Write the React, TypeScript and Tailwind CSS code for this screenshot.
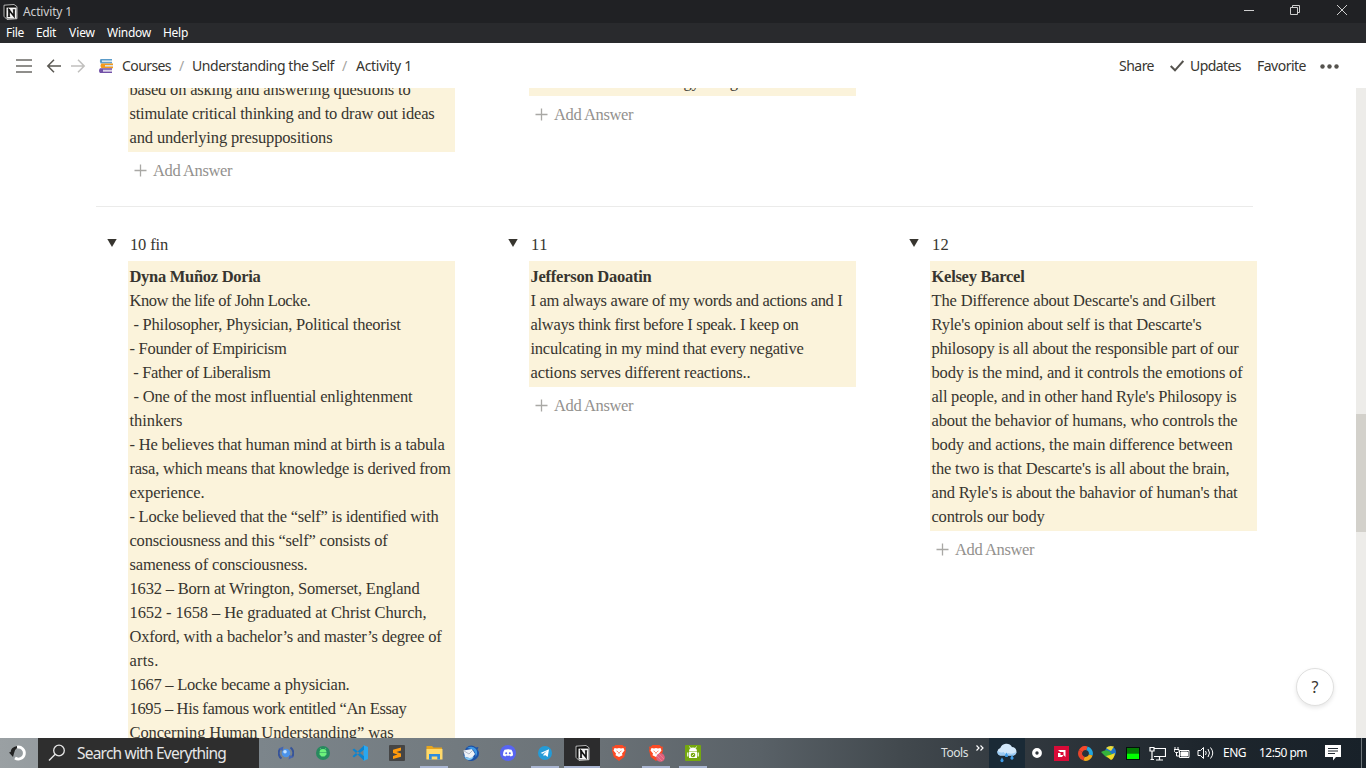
import React, { useLayoutEffect, useRef, useState } from "react";

/** A line of text whose tracking is adjusted so that it spans a given width. */
function Fit({ w, children, className = "" }: { w: number; children: string; className?: string }) {
  const ref = useRef<HTMLSpanElement>(null);
  const [ls, setLs] = useState(0);
  useLayoutEffect(() => {
    const el = ref.current;
    if (!el) return;
    const natural = el.getBoundingClientRect().width;
    setLs((w - natural) / Math.max(1, children.length));
  }, [w, children]);
  return (
    <span ref={ref} className={"inline-block whitespace-pre " + className} style={{ letterSpacing: ls + "px" }}>
      {children}
    </span>
  );
}

type L = [string, number];

const socratic: L[] = [
  ["based on asking and answering questions to", 281],
  ["stimulate critical thinking and to draw out ideas", 305],
  ["and underlying presuppositions", 203],
];
const ten: L[] = [
  ["Know the life of John Locke.", 181],
  [" - Philosopher, Physician, Political theorist", 271],
  ["- Founder of Empiricism", 157],
  [" - Father of Liberalism", 141],
  [" - One of the most influential enlightenment", 283],
  ["thinkers", 53],
  ["- He believes that human mind at birth is a tabula", 315],
  ["rasa, which means that knowledge is derived from", 321],
  ["experience.", 75],
  ["- Locke believed that the “self” is identified with", 309],
  ["consciousness and this “self” consists of", 258],
  ["sameness of consciousness.", 178],
  ["1632 – Born at Wrington, Somerset, England", 290],
  ["1652 - 1658 – He graduated at Christ Church,", 297],
  ["Oxford, with a bachelor’s and master’s degree of", 312],
  ["arts.", 29],
  ["1667 – Locke became a physician.", 220],
  ["1695 – His famous work entitled “An Essay", 277],
  ["Concerning Human Understanding” was", 264],
];
const eleven: L[] = [
  ["I am always aware of my words and actions and I", 312],
  ["always think first before I speak. I keep on", 268],
  ["inculcating in my mind that every negative", 273],
  ["actions serves different reactions..", 220],
];
const twelve: L[] = [
  ["The Difference about Descarte's and Gilbert", 284],
  ["Ryle's opinion about self is that Descarte's", 270],
  ["philosopy is all about the responsible part of our", 307],
  ["body is the mind, and it controls the emotions of", 311],
  ["all people, and in other hand Ryle's Philosopy is", 305],
  ["about the behavior of humans, who controls the", 306],
  ["body and actions, the main difference between", 301],
  ["the two is that Descarte's is all about the brain,", 298],
  ["and Ryle's is about the bahavior of human's that", 306],
  ["controls our body", 113],
];

function Note({ name, lines }: { name?: L; lines: L[] }) {
  return (
    <div className="ml-8 w-[327px] bg-[#fbf3db] pb-0.5 pl-[1.5px] pt-1">
      {name && <div className="h-6"><Fit w={name[1]} className="font-bold">{name[0]}</Fit></div>}
      {lines.map((l) => (
        <div key={l[0]} className="h-6"><Fit w={l[1]}>{l[0]}</Fit></div>
      ))}
    </div>
  );
}

function AddAnswer() {
  return (
    <div className="ml-[38px] mt-1.5 flex h-6 items-center text-[#93918e]">
      <svg width="13" height="13" viewBox="0 0 13 13" className="mr-1.5 shrink-0">
        <path d="M6.5 0.5v12M0.5 6.5h12" stroke="#a9a8a5" strokeWidth="1.3" />
      </svg>
      <Fit w={79} className="pt-px">Add Answer</Fit>
    </div>
  );
}

function Toggle({ title, name, lines }: { title: L; name: L; lines: L[] }) {
  return (
    <div className="w-[401px] shrink-0">
      <div className="flex h-[29px] items-start">
        <svg width="10" height="8" viewBox="0 0 10 8" className="ml-[11px] mr-[13px] mt-[7px]">
          <path d="M0.3 0h9.4L5 8z" fill="#37352f" />
        </svg>
        <Fit w={title[1]} className="pt-px">{title[0]}</Fit>
      </div>
      <Note name={name} lines={lines} />
      <AddAnswer />
    </div>
  );
}

function NotionLogo() {
  return (
    <svg width="15" height="16" viewBox="0 0 15 16">
      <path d="M1 1.2L11 0.5l3 2.2v12L4 15.5 1 12.3z" fill="#111" stroke="#ddd" strokeWidth="0.8" />
      <path d="M3.5 3.6h10v11h-10z" fill="#f4f4f4" />
      <path d="M6 12.2V6l5 6.2V6" stroke="#111" strokeWidth="1.7" fill="none" />
      <path d="M4.800 5.800h2.400M9.800 5.800h2.400M4.800 12.400h2.400" stroke="#111" strokeWidth="1" fill="none" />
    </svg>
  );
}

function Books() {
  return (
    <svg width="14" height="14" viewBox="0 0 14 14">
      <path d="M1.5 0H13v4.500H1.5Q0 2 1.5 0z" fill="#5b9bc9" />
      <path d="M3 1.4h10v1.7H3z" fill="#d5e4ee" />
      <path d="M2.5 4.500H14v4.700H2.5Q0.5 6.700 2.500 4.500z" fill="#f39a1e" />
      <path d="M6 6h8v1.600H6z" fill="#d9e1e8" />
      <path d="M1 9.200h12V14H1q-2-2.300 0-4.800z" fill="#7352a8" />
      <path d="M4 10.700h9v2H4z" fill="#ddd6ea" />
    </svg>
  );
}

const BAR = "relative flex h-[30px] shrink-0 items-center justify-center";

function Brave() {
  return (
    <svg width="16" height="18" viewBox="0 0 16 18">
      <path d="M4.500 1h7l1.500 1.500 2 .3-.5 2.200.5 1.500-1.800 6.500L8 17 2.800 13 1 6.500 1.500 5 1 2.800l2-.3z" fill="#fb4a24" />
      <path d="M3.500 4l2.500.6 2-.5 2 .5 2.500-.6 1 2.500-2.500 3 .5 1.700L8 13l-3.500-1.800.5-1.700-2.500-3z" fill="#fff" />
      <path d="M5 6.500l2 .7-.5.900zM11 6.500l-2 .700.500.900zM7.300 8h1.400L8 10.500z" fill="#fb4a24" />
    </svg>
  );
}

function Taskbar() {
  return (
    <footer className="flex h-[30px] w-full shrink-0 overflow-hidden bg-[linear-gradient(90deg,#9aa0a3_0px,#7c858b_260px,#737b80_440px,#6a7176_600px,#596167_760px,#42494e_900px,#343b41_1000px,#1e262d_1200px,#182129_1366px)] font-['Noto_Sans',sans-serif] text-white">
      <div className={BAR + " w-[38px]"}>
        <svg width="18" height="18" viewBox="0 0 18 18" className="-ml-0.5">
          <path d="M8 3.200A6 6 0 1 1 6 14" fill="none" stroke="#fff" strokeWidth="2.800" />
          <path d="M8 2Q1.500 3.500 1.700 8L0 8.500 4 13l1-3.800Q5.500 5.500 8 4z" fill="#222" />
        </svg>
      </div>
      <div className="flex w-[221px] items-center bg-[#2e2e2e]">
        <svg width="18" height="18" viewBox="0 0 18 18" className="ml-[10px] mr-[11px]">
          <circle cx="11" cy="6.500" r="5.300" fill="none" stroke="#e8e8e8" strokeWidth="1.300" />
          <path d="M7.200 10.300L1 16.500" stroke="#e8e8e8" strokeWidth="1.400" />
        </svg>
        <Fit w={149} className="pt-px text-[15.500px] text-[#e6e6e6]">Search with Everything</Fit>
      </div>
      <div className={BAR + " ml-[9px] w-9"}>
        <svg width="16" height="16" viewBox="0 0 16 16">
          <circle cx="8" cy="8" r="4.300" fill="#4b93ea" /><circle cx="7" cy="6.800" r="1.800" fill="#c4e2ff" />
          <path d="M3.500 13.500A6.800 6.800 0 0 1 2 4M12.500 2.500a6.800 6.800 0 0 1 1.500 9.500" stroke="#36549a" strokeWidth="2" fill="none" />
          <path d="M0.500 3.500L5.500 1.500 4.500 6zM10.500 14.500l1-4.500 4 2z" fill="#4565b0" />
        </svg>
      </div>
      <div className={BAR + " ml-[1px] w-9"}>
        <svg width="14" height="14" viewBox="0 0 14 14">
          <circle cx="7" cy="7" r="7" fill="#28895f" />
          <path d="M3.500 6.500a3.500 3.500 0 0 1 7 0zM3.500 7h7v1.500L8.500 10.500h-3l-2-2z" fill="#6cf27c" />
          <path d="M5 3.500L4.300 2.300M9 3.500L9.700 2.300" stroke="#6cf27c" strokeWidth="0.800" />
        </svg>
      </div>
      <div className={BAR + " ml-[1px] w-9"}>
        <svg width="16" height="16" viewBox="0 0 16 16">
          <path d="M11.500 0L16 2v12l-4.500 2z" fill="#2aa7f0" />
          <path d="M12 0.500v4.200L2 12.500.500 11.200zM12 15.500v-4.200L2 3.500.500 4.800z" fill="#0b84d0" />
        </svg>
      </div>
      <div className={BAR + " ml-[1px] w-9"}>
        <svg width="16" height="16" viewBox="0 0 16 16">
          <rect width="16" height="16" rx="1" fill="#454545" />
          <path d="M12 2.500v3L7.500 7l4.500 1.500v3.200L4 14v-3l4.500-1.500L4 8V4.800z" fill="#ff9a0c" />
        </svg>
      </div>
      <div className={BAR + " ml-[1px] w-9"}>
        <svg width="17" height="14" viewBox="0 0 17 14">
          <path d="M0.500 0H6l1.500 1.500H16V13H0.500z" fill="#e6a51e" /><path d="M0.500 3h16v10.500H0.500z" fill="#ffd96a" />
          <path d="M3 13.500V8h11v5.500h-2.700v-3H5.700v3z" fill="#2f8bdb" />
        </svg>
        <span className="absolute bottom-0 left-1 h-0.5 w-7 bg-[#aab6d2]" />
      </div>
      <div className={BAR + " ml-[1px] w-9"}>
        <svg width="17" height="17" viewBox="0 0 17 17">
          <path d="M3 3Q8-1.500 13 2.500l2.500-.500-1 2.500q3 4 0 8-3.500 4.500-9 3Q.500 13.500.500 9z" fill="#1c51a6" />
          <path d="M0.500 5.500L9 4l3 5-3.500 4.500L2 12z" fill="#eef2f7" /><path d="M0.800 5.800L6 9l4-4" fill="none" stroke="#a3abbd" strokeWidth="0.800" />
          <path d="M4 3q5-3 9 1 2.500 4-.500 8 .500-5-3-7.500Q7 3 4 3z" fill="#3f97e3" />
          <path d="M1 11q5 3.500 10 .500-2 4-6 3.500Q2 14 1 11z" fill="#83c9f5" />
        </svg>
      </div>
      <div className={BAR + " ml-[1px] w-9"}>
        <svg width="16" height="16" viewBox="0 0 16 16">
          <circle cx="8" cy="8" r="8" fill="#5865f2" />
          <path d="M4.500 4.800Q8 3.500 11.500 4.800q1.700 2.500 1.600 5.400-1 1-2.600 1.200l-.7-1q-1.800.5-3.600 0l-.7 1q-1.600-.2-2.600-1.200Q2.800 7.300 4.500 4.800z" fill="#fff" />
          <circle cx="6.200" cy="8.200" r="1" fill="#5865f2" /><circle cx="9.800" cy="8.200" r="1" fill="#5865f2" />
        </svg>
      </div>
      <div className={BAR + " ml-[1px] w-9"}>
        <svg width="14" height="14" viewBox="0 0 14 14">
          <circle cx="7" cy="7" r="7" fill="#249bd7" /><path d="M2.500 7l8.500-3.700L9.700 11 7 9l-1.300 1.300L5.500 8.200 9 5 4.500 7.800z" fill="#fff" />
        </svg>
        <span className="absolute bottom-0 left-1 h-0.5 w-7 bg-[#aab6d2]" />
      </div>
      <div className={BAR + " ml-[1px] w-9 bg-[#2c2c2d]"}>
        <NotionLogo />
        <span className="absolute bottom-0 left-0 h-0.5 w-9 bg-[#aab6d2]" />
      </div>
      <div className={BAR + " ml-[1px] w-9"}><Brave /></div>
      <div className={BAR + " ml-[1px] w-9"}>
        <Brave />
        <svg width="9" height="9" viewBox="0 0 9 9" className="absolute left-[18px] top-[15px]">
          <circle cx="4.500" cy="4.500" r="4.300" fill="#e2607c" /><path d="M1 3l5 5M3 1l5 5" stroke="#f38ea0" strokeWidth="0.600" />
        </svg>
        <span className="absolute bottom-0 left-1 h-0.5 w-7 bg-[#aab6d2]" />
      </div>
      <div className={BAR + " ml-[1px] w-9"}>
        <svg width="16" height="16" viewBox="0 0 16 16">
          <rect width="16" height="16" rx="1" fill="#75a80f" />
          <path d="M4 6.500a4 4 0 0 1 8 0zM4 7h8v6H4zM2.200 7.500h1.200v4H2.200zM12.600 7.500h1.200v4h-1.200z" fill="#fff" />
          <path d="M5.500 3L4.500 1.500M10.500 3l1-1.500" stroke="#fff" strokeWidth="0.900" />
          <circle cx="8" cy="10" r="2.300" fill="#75a80f" /><path d="M7 11l2-2" stroke="#fff" strokeWidth="0.800" />
        </svg>
        <span className="absolute bottom-0 left-1 h-0.5 w-7 bg-[#aab6d2]" />
      </div>
      <div className="ml-auto flex h-[30px] w-[425px] shrink-0 items-center text-xs">
        <Fit w={27} className="text-[#dfe1e2]">Tools</Fit>
        <svg width="8" height="6" viewBox="0 0 8 6" className="-mt-2.5 ml-2">
          <path d="M0.500 0.500L3 3 .5 5.500M4.500 0.500L7 3 4.500 5.500" fill="none" stroke="#fff" strokeWidth="1.200" />
        </svg>
        <div className="ml-[5px] flex h-[30px] w-9 items-center justify-center bg-[#1a2a36]">
          <svg width="22" height="20" viewBox="0 0 22 20">
            <path d="M4 12.500a4 4 0 0 1 .3-7.500A6.500 6.500 0 0 1 16 4a4.500 4.500 0 0 1 2 8.500z" fill="#d2e8fb" />
            <path d="M4 12.500a4 4 0 0 1-2.500-5q2 3 6 1.500 2 3 5 1 3 2 8-1a4 4 0 0 1-3 3.500z" fill="#9bcbf4" />
            <path d="M6 14.500l1.500 2.500a1.600 1.600 0 1 1-3 0zM16 12l1.500 2.500a1.600 1.600 0 1 1-3 0zM10.500 9.500l1.400 2.500a1.500 1.500 0 1 1-2.800 0z" fill="#3f9be6" />
          </svg>
        </div>
        <svg width="10" height="10" viewBox="0 0 10 10" className="ml-[7px]"><circle cx="5" cy="5" r="3.300" fill="none" stroke="#fff" strokeWidth="3.200" /></svg>
        <svg width="15" height="15" viewBox="0 0 15 15" className="ml-[12px]">
          <path d="M0 0h15v15H0z" fill="#d90b38" /><path d="M4 4h7.500v7L9.500 9V6H6zM4 7v4h4l1.500-2H6.500V7z" fill="#fff" />
        </svg>
        <svg width="15" height="15" viewBox="0 0 15 15" className="ml-[9px]">
          <g fill="none" strokeWidth="4"><path d="M2.700 5A5.400 5.400 0 0 1 9 2.300" stroke="#f6482b" /><path d="M9 2.300A5.400 5.400 0 0 1 12.700 9" stroke="#22a6df" /><path d="M12.700 9A5.400 5.400 0 0 1 6 12.700" stroke="#f0a91a" /><path d="M6 12.700A5.400 5.400 0 0 1 2.700 5" stroke="#e8442a" /></g>
        </svg>
        <svg width="16" height="15" viewBox="0 0 16 15" className="ml-[8px]">
          <circle cx="9.500" cy="6" r="5.500" fill="#2074c9" /><path d="M5 2q3-3 8-1.500L10 5z" fill="#e8dc3b" /><path d="M0 6q5-3 8-1l3 3-3 4-3-1z" fill="#35b23c" /><path d="M9 9l5-2q-1 6-4 7L5 10z" fill="#efda25" />
        </svg>
        <svg width="14" height="13" viewBox="0 0 14 13" className="ml-[9px]"><path d="M0 0h14v13H0z" fill="#02100a" /><path d="M1 1h12v5.500H1z" fill="#047b04" /><path d="M1 6.500h12V12H1z" fill="#00ff00" /></svg>
        <svg width="17" height="15" viewBox="0 0 17 15" className="ml-[9px]" fill="none" stroke="#fff">
          <path d="M5 2.500h11.500v8H5M10.500 11v3M7 14h7M1 1.500h4v3.500H1zM3 5v8.500M1.500 13.500H5" strokeWidth="1.200" />
        </svg>
        <svg width="16" height="12" viewBox="0 0 16 12" className="ml-[8px]" fill="none" stroke="#fff">
          <path d="M5.500 3.500h9.500v7H5.500z" /><path d="M7 5h6.500v4H7z" fill="#fff" /><path d="M1 0v2.500M4 0v2.500M0 2.500h5v2l-1 1H1.500l-1-1zM2.500 5.500V9H5" />
        </svg>
        <svg width="17" height="14" viewBox="0 0 17 14" className="ml-[7px]" fill="none" stroke="#fff">
          <path d="M1 4.500h2.500L6.500 1.500v11l-3-3H1zM8.500 5q1.500 2 0 4M11 3q3 4 0 8M13.500 1.500q4.500 5.500 0 11" />
        </svg>
        <Fit w={23} className="ml-[9px]">ENG</Fit>
        <Fit w={48} className="ml-[13px]">12:50 pm</Fit>
        <svg width="16" height="16" viewBox="0 0 16 16" className="ml-[18px]">
          <path d="M0 0h16v12h-5l-3 3.500V12H0z" fill="#fff" /><path d="M3 3.500h10M3 6h10M3 8.500h7" stroke="#202931" />
        </svg>
        <span className="ml-5 h-[30px] w-px bg-[#6d757a]" />
      </div>
    </footer>
  );
}

export default function App() {
  return (
    <div className="flex h-[768px] w-[1366px] flex-col overflow-hidden bg-white text-[#37352f]">
      <div className="flex h-[23px] shrink-0 items-center bg-[#202124] font-['Noto_Sans',sans-serif] text-xs text-[#cfcfd0]">
        <div className="ml-[3px] mr-[5px]"><NotionLogo /></div>
        <Fit w={49}>Activity 1</Fit>
        <svg width="104" height="12" viewBox="0 0 104 12" className="-mt-[3px] ml-auto mr-[18px]" fill="none" stroke="#cfcfcf">
          <path d="M0 6.500h10" /><path d="M46.500 3.500h7v7h-7zM48.500 3.500v-2h7v7h-2" /><path d="M93 1l10 10M103 1L93 11" />
        </svg>
      </div>
      <nav className="flex h-5 shrink-0 items-center gap-3 bg-[#292a2d] pl-1.5 font-['Noto_Sans',sans-serif] text-xs text-white">
        <Fit w={18}>File</Fit>
        <Fit w={20}>Edit</Fit>
        <Fit w={26} className="ml-px">View</Fit>
        <Fit w={44}>Window</Fit>
        <Fit w={25}>Help</Fit>
      </nav>
      <header className="flex h-[45px] shrink-0 items-center font-['Noto_Sans',sans-serif] text-sm text-[#37352f]">
        <svg width="70" height="14" viewBox="0 0 70 14" className="ml-4 mr-[13px] mt-px" fill="none">
          <path d="M0 1h16M0 7h16M0 13h16" stroke="#6b6965" strokeWidth="1.300" />
          <path d="M45 7H32M38 0.800L31.800 7 38 13.200" stroke="#5a5853" strokeWidth="1.500" />
          <path d="M55 7h13M62 0.800L68.200 7 62 13.200" stroke="#c1c0be" strokeWidth="1.500" />
        </svg>
        <Books />
        <Fit w={49} className="ml-[9px] pt-px">Courses</Fit>
        <span className="ml-2 w-[13px] text-[#a5a4a0]">/</span>
        <Fit w={142} className="pt-px">Understanding the Self</Fit>
        <span className="ml-2 w-[13px] text-[#a5a4a0]">/</span>
        <Fit w={56} className="ml-[1px] pt-px">Activity 1</Fit>
        <Fit w={35} className="ml-auto pt-px">Share</Fit>
        <svg width="14" height="12" viewBox="0 0 14 12" className="ml-4 mr-1.5"><path d="M0.700 6l4.300 4.300L13.300 1" fill="none" stroke="#55534e" strokeWidth="2" /></svg>
        <Fit w={51} className="pt-px">Updates</Fit>
        <Fit w={49} className="ml-4 pt-px">Favorite</Fit>
        <svg width="19" height="5" viewBox="0 0 19 5" className="ml-[14px] mr-[27px] mt-px" fill="#55534e"><circle cx="2.500" cy="2.500" r="2.200" /><circle cx="9.500" cy="2.500" r="2.200" /><circle cx="16.500" cy="2.500" r="2.200" /></svg>
      </header>
      <main className="flex h-[650px] shrink-0 overflow-hidden font-['Liberation_Serif',serif] text-[16.500px] leading-6">
        <div className="h-[650px] w-[1260px] overflow-hidden pl-24">
          <div className="flex h-[118px]">
            <div className="-mt-3.5 w-[401px] shrink-0"><Note lines={socratic} /><AddAnswer /></div>
            <div className="-mt-[22px] w-[401px] shrink-0"><Note lines={[["can be found in technology being", 207]]} /><AddAnswer /></div>
          </div>
          <div className="h-px w-[1157px] bg-[#ebebea]" />
          <div className="flex pt-[25px]">
            <Toggle title={["10 fin", 38]} name={["Dyna Muñoz Doria", 131]} lines={ten} />
            <Toggle title={["11", 17]} name={["Jefferson Daoatin", 121]} lines={eleven} />
            <Toggle title={["12", 17]} name={["Kelsey Barcel", 93]} lines={twelve} />
          </div>
        </div>
        <div className="flex w-24 items-end justify-end pb-8 pr-[22px]">
          <button className="h-[38px] w-[38px] shrink-0 rounded-full border border-[#e0e0df] bg-white font-['Noto_Sans',sans-serif] text-base shadow-[0_2px_4px_rgba(15,15,15,0.1)]">?</button>
        </div>
        <div className="w-2.5 bg-[#edece9] pt-[326px]"><div className="h-[118px] bg-[#d3d1cb]" /></div>
      </main>
      <Taskbar />
    </div>
  );
}
